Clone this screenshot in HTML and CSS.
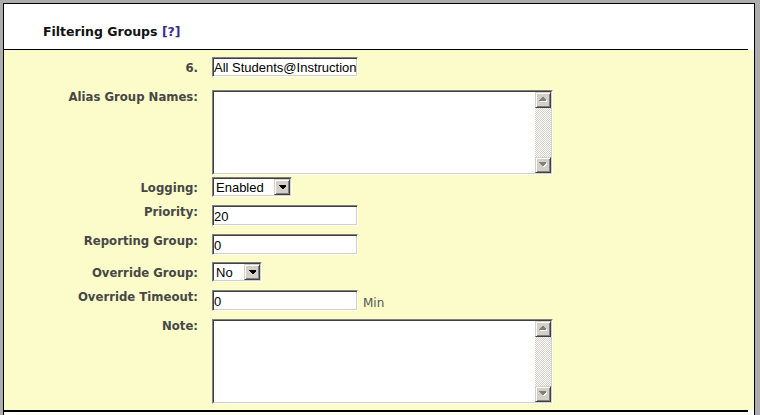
FILE: index.html
```html
<!DOCTYPE html>
<html lang="en">
<head>
<meta charset="utf-8">
<title>Filtering Groups</title>
<link rel="stylesheet" href="styles.css">
</head>
<body>
<div class="frame">
  <div class="header">
    <h1 class="title">Filtering Groups <a class="help" href="#">[?]</a></h1>
  </div>
  <div class="rule"></div>
  <form class="panel">
    <div class="row row-first">
      <label class="label label-mid">6.</label>
      <div class="field"><input class="text text-name" type="text" value="All Students@Instruction"></div>
    </div>

    <div class="row row-alias">
      <label class="label">Alias Group Names:</label>
      <div class="field">
        <div class="area">
          <div class="area-inner">
            <textarea class="area-input"></textarea>
            <div class="scrollbar">
              <span class="sb-btn"><svg width="9" height="6" viewBox="0 0 9 6" shape-rendering="crispEdges"><polygon points="4,1 5,1 8,4 8,5 1,5 1,4" fill="#fff"/><polygon points="3,0 4,0 7,3 7,4 0,4 0,3" fill="#808080"/></svg></span>
              <span class="sb-track"></span>
              <span class="sb-btn"><svg width="9" height="6" viewBox="0 0 9 6" shape-rendering="crispEdges"><polygon points="1,1 8,1 8,2 5,5 4,5 1,2" fill="#fff"/><polygon points="0,0 7,0 7,1 4,4 3,4 0,1" fill="#808080"/></svg></span>
            </div>
          </div>
        </div>
      </div>
    </div>

    <div class="row row-logging">
      <label class="label label-select">Logging:</label>
      <div class="field">
        <div class="select select-logging">
          <div class="select-inner">
            <span class="select-value">Enabled</span>
            <span class="sb-btn"><svg width="7" height="4" viewBox="0 0 7 4" shape-rendering="crispEdges"><polygon points="0,0 7,0 7,1 4,4 3,4 0,1" fill="#000"/></svg></span>
          </div>
        </div>
      </div>
    </div>

    <div class="row">
      <label class="label">Priority:</label>
      <div class="field"><input class="text" type="text" value="20"></div>
    </div>

    <div class="row">
      <label class="label">Reporting Group:</label>
      <div class="field"><input class="text" type="text" value="0"></div>
    </div>

    <div class="row row-tight">
      <label class="label label-select">Override Group:</label>
      <div class="field">
        <div class="select select-override">
          <div class="select-inner">
            <span class="select-value">No</span>
            <span class="sb-btn"><svg width="7" height="4" viewBox="0 0 7 4" shape-rendering="crispEdges"><polygon points="0,0 7,0 7,1 4,4 3,4 0,1" fill="#000"/></svg></span>
          </div>
        </div>
      </div>
    </div>

    <div class="row">
      <label class="label">Override Timeout:</label>
      <div class="field"><input class="text" type="text" value="0"><span class="unit">Min</span></div>
    </div>

    <div class="row">
      <label class="label">Note:</label>
      <div class="field">
        <div class="area">
          <div class="area-inner">
            <textarea class="area-input"></textarea>
            <div class="scrollbar">
              <span class="sb-btn"><svg width="9" height="6" viewBox="0 0 9 6" shape-rendering="crispEdges"><polygon points="4,1 5,1 8,4 8,5 1,5 1,4" fill="#fff"/><polygon points="3,0 4,0 7,3 7,4 0,4 0,3" fill="#808080"/></svg></span>
              <span class="sb-track"></span>
              <span class="sb-btn"><svg width="9" height="6" viewBox="0 0 9 6" shape-rendering="crispEdges"><polygon points="1,1 8,1 8,2 5,5 4,5 1,2" fill="#fff"/><polygon points="0,0 7,0 7,1 4,4 3,4 0,1" fill="#808080"/></svg></span>
            </div>
          </div>
        </div>
      </div>
    </div>
  </form>
  <div class="rule rule-bottom"></div>
</div>
</body>
</html>
```

FILE: styles.css
```css
* { box-sizing: border-box; }

html, body {
  margin: 0;
  height: 100%;
}

body {
  background: #acacac;
  padding: 3px 5px 0 3px;
  overflow: hidden;
}

.frame {
  height: 412px;
  background: #fff;
  border: 1px solid #000;
  border-bottom: none;
}

.header {
  height: 45px;
  padding: 20px 0 0 39px;
}

.title {
  margin: 0;
  font: bold 12.5px/15px "DejaVu Sans", Verdana, sans-serif;
  color: #111;
}

.help {
  color: #3b2a8c;
  text-decoration: none;
}

.rule {
  width: 744px;
  height: 1px;
  background: #000;
}

.rule-bottom {
  height: 2px;
}

.panel {
  margin: 0;
  background: #fbfcca;
  padding: 7px 0 6px;
}

.row {
  display: flex;
  align-items: flex-start;
  margin-top: 8px;
}

.row-first { margin-top: 0; }
.row-alias { margin-top: 13px; }
.row-logging { margin-top: 2px; }
.row-tight { margin-top: 7px; }

.label {
  width: 194px;
  flex: none;
  text-align: right;
  font: bold 11.7px/15px "DejaVu Sans", Verdana, sans-serif;
  color: #474747;
}

.label-mid { padding-top: 4px; }
.label-select { padding-top: 4px; }

.field {
  margin-left: 14px;
  display: flex;
  align-items: baseline;
}

.text {
  width: 146px;
  height: 21px;
  margin: 0;
  padding: 1px 0 0 1px;
  border: 1px solid;
  border-color: #808080 #fff #fff #808080;
  box-shadow: inset 1px 1px #404040, inset -1px -1px #d4d0c8;
  background: #fff;
  font: 13px "Liberation Sans", Arial, sans-serif;
  color: #000;
  outline: none;
}

.text-name { height: 20px; padding-top: 0; }

.unit {
  align-self: flex-end;
  margin-left: 5px;
  font: 12px/15px "DejaVu Sans", Verdana, sans-serif;
  color: #555;
}

.area {
  width: 341px;
  height: 85px;
  border: 1px solid;
  border-color: #808080 #fff #fff #808080;
}

.area-inner {
  display: flex;
  height: 100%;
  border: 1px solid;
  border-color: #404040 #d4d0c8 #d4d0c8 #404040;
  background: #fff;
}

.area-input {
  flex: 1;
  min-width: 0;
  margin: 0;
  padding: 1px 2px;
  border: none;
  resize: none;
  outline: none;
  background: #fff;
  font: 13px "Liberation Sans", Arial, sans-serif;
}

.scrollbar {
  width: 16px;
  flex: none;
  display: flex;
  flex-direction: column;
}

.sb-btn {
  width: 16px;
  height: 16px;
  flex: none;
  display: flex;
  align-items: center;
  justify-content: center;
  background: #d4d0c8;
  border: 1px solid;
  border-color: #d4d0c8 #404040 #404040 #d4d0c8;
  box-shadow: inset 1px 1px #fff, inset -1px -1px #808080;
}

.sb-btn svg { display: block; }

.sb-track {
  flex: 1;
  background: repeating-conic-gradient(#d4d0c8 0 25%, #fff 0 50%) 0 0 / 2px 2px;
}

.select {
  height: 20px;
  border: 1px solid;
  border-color: #808080 #fff #fff #808080;
}

.select-logging { width: 80px; }
.select-override { width: 50px; }

.select-inner {
  display: flex;
  height: 100%;
  border: 1px solid;
  border-color: #404040 #d4d0c8 #d4d0c8 #404040;
  background: #fff;
}

.select-value {
  flex: 1;
  padding: 1px 0 0 2px;
  font: 13px/16px "Liberation Sans", Arial, sans-serif;
  color: #000;
  white-space: nowrap;
  overflow: hidden;
}
```
